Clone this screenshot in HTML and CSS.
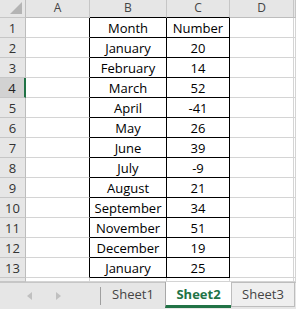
FILE: index.html
```html
<!DOCTYPE html>
<html lang="en">
<head>
    <meta charset="UTF-8">
    <title>Sheet2</title>
    <link rel="stylesheet" href="styles.css">
</head>
<body>
    <div class="sheet">
        <!-- cabecera de columnas -->
        <div class="fila cabecera">
            <div class="celda ch esquina">
                <svg width="25" height="17" viewBox="0 0 25 17"><polygon points="10,14 22,14 22,2" fill="#b4b4b4"/></svg>
            </div>
            <div class="celda ca">A</div>
            <div class="celda cb negro-abajo">B</div>
            <div class="celda cc negro-abajo">C</div>
            <div class="celda cd">D</div>
            <div class="celda ce"></div>
        </div>

        <div class="fila"><div class="celda ch">1</div><div class="celda ca negro"></div><div class="celda cb tabla">Month</div><div class="celda cc tabla">Number</div><div class="celda cd"></div><div class="celda ce"></div></div>
        <div class="fila"><div class="celda ch">2</div><div class="celda ca negro"></div><div class="celda cb tabla">January</div><div class="celda cc tabla">20</div><div class="celda cd"></div><div class="celda ce"></div></div>
        <div class="fila"><div class="celda ch">3</div><div class="celda ca negro"></div><div class="celda cb tabla">February</div><div class="celda cc tabla">14</div><div class="celda cd"></div><div class="celda ce"></div></div>
        <div class="fila"><div class="celda ch activa">4</div><div class="celda ca negro"></div><div class="celda cb tabla">March</div><div class="celda cc tabla">52</div><div class="celda cd"></div><div class="celda ce"></div></div>
        <div class="fila"><div class="celda ch">5</div><div class="celda ca negro"></div><div class="celda cb tabla">April</div><div class="celda cc tabla">-41</div><div class="celda cd"></div><div class="celda ce"></div></div>
        <div class="fila"><div class="celda ch">6</div><div class="celda ca negro"></div><div class="celda cb tabla">May</div><div class="celda cc tabla">26</div><div class="celda cd"></div><div class="celda ce"></div></div>
        <div class="fila"><div class="celda ch">7</div><div class="celda ca negro"></div><div class="celda cb tabla">June</div><div class="celda cc tabla">39</div><div class="celda cd"></div><div class="celda ce"></div></div>
        <div class="fila"><div class="celda ch">8</div><div class="celda ca negro"></div><div class="celda cb tabla">July</div><div class="celda cc tabla">-9</div><div class="celda cd"></div><div class="celda ce"></div></div>
        <div class="fila"><div class="celda ch">9</div><div class="celda ca negro"></div><div class="celda cb tabla">August</div><div class="celda cc tabla">21</div><div class="celda cd"></div><div class="celda ce"></div></div>
        <div class="fila"><div class="celda ch">10</div><div class="celda ca negro"></div><div class="celda cb tabla">September</div><div class="celda cc tabla">34</div><div class="celda cd"></div><div class="celda ce"></div></div>
        <div class="fila"><div class="celda ch">11</div><div class="celda ca negro"></div><div class="celda cb tabla">November</div><div class="celda cc tabla">51</div><div class="celda cd"></div><div class="celda ce"></div></div>
        <div class="fila"><div class="celda ch">12</div><div class="celda ca negro"></div><div class="celda cb tabla">December</div><div class="celda cc tabla">19</div><div class="celda cd"></div><div class="celda ce"></div></div>
        <div class="fila"><div class="celda ch">13</div><div class="celda ca negro"></div><div class="celda cb tabla">January</div><div class="celda cc tabla">25</div><div class="celda cd"></div><div class="celda ce"></div></div>

        <!-- fila 14, cortada por la barra de hojas -->
        <div class="fila corta"><div class="celda ch"></div><div class="celda ca"></div><div class="celda cb"></div><div class="celda cc"></div><div class="celda cd"></div><div class="celda ce"></div></div>
    </div>

    <div class="hojas">
        <div class="nav">
            <span class="flecha izq"></span>
            <span class="flecha der"></span>
        </div>
        <div class="separador"></div>
        <div class="hoja h1">Sheet1</div>
        <div class="hoja h2 activa">Sheet2</div>
        <div class="hoja h3">Sheet3</div>
    </div>
</body>
</html>
```

FILE: styles.css
```css
/* Hoja de cálculo */
body {
    margin: 0;
    width: 296px;
    height: 309px;
    overflow: hidden;
    background: #fff;
    font-family: "Open Sans", "Noto Sans", sans-serif;
    font-size: 13px;
    color: #000;
}

.fila {
    display: flex;
    height: 20px;
}

.celda {
    box-sizing: border-box;
    flex: none;
    height: 100%;
    border-right: 1px solid #d4d4d4;
    border-bottom: 1px solid #d4d4d4;
    text-align: center;
    line-height: 18px;
    padding-top: 1px;
    white-space: nowrap;
    overflow: hidden;
}

.ch { width: 26px; }
.ca { width: 64px; }
.cb { width: 77px; }
.cc { width: 63px; }
.cd { width: 64px; }
.ce { flex: 1; }

/* cabeceras grises */
.cabecera {
    height: 18px;
}

.cabecera .celda {
    background: #e6e6e6;
    color: #444;
    font-size: 12px;
    line-height: 15px;
    padding-top: 0;
    border-right-color: #c6c6c6;
    border-bottom-color: #bdbdbd;
}

.esquina svg {
    display: block;
}

.fila .ch {
    background: #e6e6e6;
    color: #333;
    border-right-color: #bdbdbd;
    border-bottom-color: #c6c6c6;
}

.fila .ch.activa {
    background: #d2d2d2;
    color: #222;
    border-right: 2px solid #217346;
}

.corta {
    height: 4px;
}

/* bordes negros de la tabla */
.negro {
    border-right-color: #000;
}

.cabecera .negro-abajo {
    border-bottom-color: #000;
}

.tabla {
    border-right-color: #000;
    border-bottom-color: #000;
}

/* barra de hojas */
.hojas {
    display: flex;
    height: 27px;
    box-sizing: border-box;
    border-top: 1px solid #c6c6c6;
    background: #e6e6e6;
    color: #444;
}

.nav {
    width: 100px;
    display: flex;
    align-items: center;
    padding-left: 27px;
    box-sizing: border-box;
}

.flecha {
    width: 0;
    height: 0;
    border-top: 4px solid transparent;
    border-bottom: 4px solid transparent;
}

.flecha.izq {
    border-right: 5px solid #c0c0c0;
}

.flecha.der {
    border-left: 5px solid #c0c0c0;
    margin-left: 24px;
}

.separador {
    width: 1px;
    height: 18px;
    margin-top: 4px;
    background: #9f9f9f;
}

.hoja {
    box-sizing: border-box;
    text-align: center;
    line-height: 22px;
}

.h1 {
    width: 64px;
    margin-left: 0;
}

.h2 {
    width: 66px;
    height: 26px;
    margin-top: -1px;
    background: #fff;
    border-left: 1px solid #a8a8a8;
    border-bottom: 3px solid #217346;
    color: #217346;
    font-weight: bold;
    line-height: 24px;
}

.h3 {
    width: 64px;
    height: 25px;
    margin-top: -1px;
    background: #efefef;
    border: 1px solid #bdbdbd;
    line-height: 23px;
}
```
